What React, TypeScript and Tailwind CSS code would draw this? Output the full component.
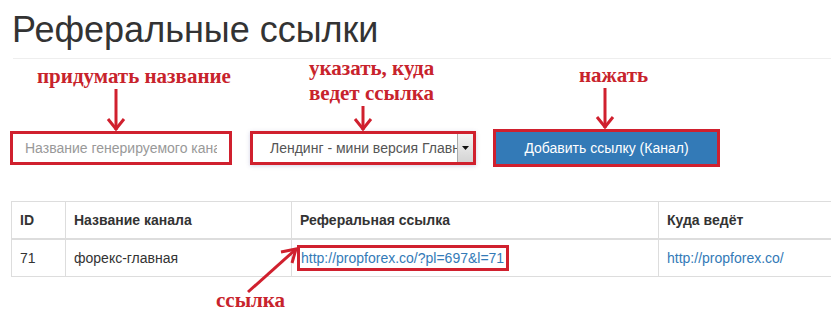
const note = "font-['Liberation_Serif',serif] font-bold text-[21px] leading-[25px] text-[#c8232c]";

function Arrow({ h, className = '' }: { h: number; className?: string }) {
  // straight red arrow pointing down
  return (
    <svg width="20" height={h} viewBox={`0 0 20 ${h}`} className={className}>
      <line x1="10" y1="0" x2="10" y2={h - 1} stroke="#d0202e" strokeWidth={3} />
      <polyline points={`2,${h - 12} 10,${h - 2} 18,${h - 12}`} fill="none" stroke="#d0202e" strokeWidth={3} />
    </svg>
  )
}

export default function App() {
  return (
    <div className="relative h-[333px] w-[831px] overflow-hidden bg-white pl-[10px] font-['Liberation_Sans',Arial,sans-serif] text-[14px] text-[#333]">
      <h1 className="pl-[2px] pt-[10px] text-[36px] leading-[1.1] font-normal text-[#333]">Реферальные ссылки</h1>
      <div className="mt-[8px] ml-[3px] h-px bg-[#eee]" />

      {/* form with annotations */}
      <div className="mt-[-6px] flex items-end">
        <div className="flex w-[222px] flex-col">
          <div className={`${note} ml-[27px] whitespace-nowrap`}>придумать название</div>
          <Arrow h={42} className="ml-[96px]" />
          <div className="mb-[2px] h-[34px] border-[3px] border-[#d0202e] bg-white">
            <input
              placeholder="Название генерируемого канала"
              className="h-full w-full bg-white px-[12px] text-[14px] text-[#555] outline-none placeholder:text-[#999]"
            />
          </div>
        </div>

        <div className="ml-[18px] flex w-[226px] flex-col">
          <div className={`${note} ml-[59px] whitespace-nowrap pt-[3px] leading-[24px]`}>
            указать, куда
            <br />
            ведет ссылка
          </div>
          <Arrow h={25} className="ml-[103px]" />
          <div className="mb-[2px] flex h-[34px] border-[3px] border-[#d0202e] bg-white shadow-[0_1px_4px_rgba(80,80,160,0.25)]">
            <div className="flex-1 overflow-hidden whitespace-nowrap pl-[17px] leading-[28px] text-[#555]">
              Лендинг - мини версия Главная
            </div>
            <div className="flex w-[16px] items-center justify-center border-l border-[#aaa] bg-gradient-to-b from-[#f4f4f4] to-[#d4d4d4]">
              <svg width="7" height="4" viewBox="0 0 7 4">
                <path d="M0 0h7L3.5 4z" fill="#111" />
              </svg>
            </div>
          </div>
        </div>

        <div className="ml-[17px] flex w-[227px] flex-col">
          <div className={`${note} ml-[86px] whitespace-nowrap`}>нажать</div>
          <Arrow h={41} className="ml-[102px]" />
          <div className="h-[38px] border-[3px] border-[#d0202e] bg-[#337ab7]">
            <div className="text-center text-[14px] leading-[32px] text-white">Добавить ссылку (Канал)</div>
          </div>
        </div>
      </div>

      {/* table */}
      <table className="mt-[34px] ml-px w-[1000px] border-collapse border border-[#ddd] text-left">
        <thead>
          <tr className="border-b-2 border-[#ddd]">
            <th className="w-[54px] border border-[#ddd] px-[8px] py-[8px] font-bold leading-[20px]">ID</th>
            <th className="w-[226px] border border-[#ddd] px-[8px] py-[8px] font-bold leading-[20px]">Название канала</th>
            <th className="w-[367px] border border-[#ddd] px-[8px] py-[8px] font-bold leading-[20px]">Реферальная ссылка</th>
            <th className="border border-[#ddd] px-[8px] py-[8px] font-bold leading-[20px]">Куда ведёт</th>
          </tr>
        </thead>
        <tbody>
          <tr>
            <td className="border border-[#ddd] px-[8px] py-[8px] leading-[20px]">71</td>
            <td className="border border-[#ddd] px-[8px] py-[8px] leading-[20px]">форекс-главная</td>
            <td className="border border-[#ddd] py-[5px] pl-[5px] leading-[20px]">
              <span className="inline-block border-[3px] border-[#d0202e] pl-[1px] pr-[2px] text-[#337ab7]">
                http://propforex.co/?pl=697&amp;l=71
              </span>
            </td>
            <td className="border border-[#ddd] px-[8px] py-[8px] leading-[20px] text-[#337ab7]">http://propforex.co/</td>
          </tr>
        </tbody>
      </table>

      {/* "ссылка" note with diagonal arrow */}
      <div className="absolute left-[216px] top-[288px]">
        <svg width="90" height="50" viewBox="0 0 90 50" className="absolute left-[27px] top-[-42px]">
          <line x1="5" y1="46" x2="52" y2="4" stroke="#d0202e" strokeWidth={3} />
          <polyline points="38,6 53,3 49,17" fill="none" stroke="#d0202e" strokeWidth={3} />
        </svg>
        <div className={note}>ссылка</div>
      </div>
    </div>
  )
}
